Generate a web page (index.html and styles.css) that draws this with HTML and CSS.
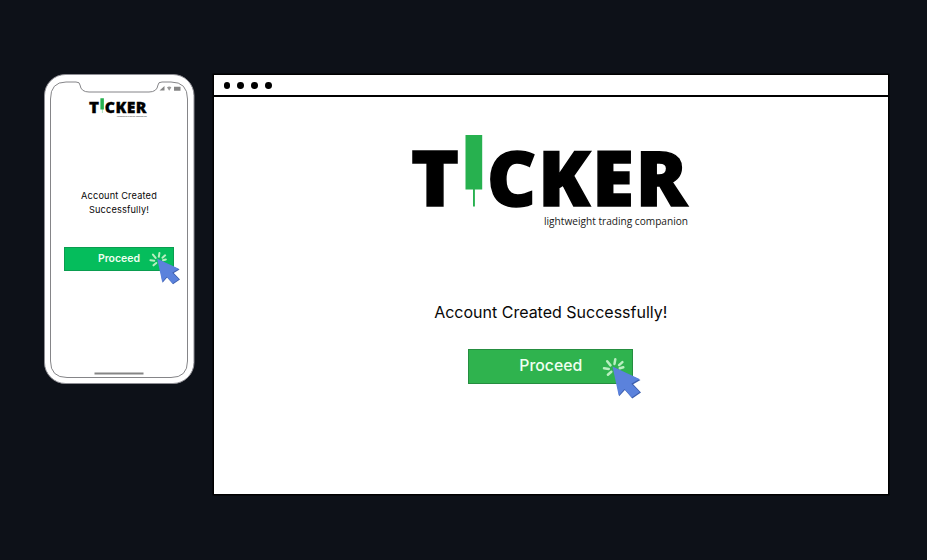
FILE: index.html
```html
<!DOCTYPE html>
<html lang="en">
<head>
<meta charset="utf-8">
<title>Ticker</title>
<link rel="stylesheet" href="styles.css">
</head>
<body>
<svg class="defs" aria-hidden="true">
  <symbol id="logo" viewBox="0 0 278 96" overflow="visible">
    <g class="wordmark">
      <text x="0" y="72" textLength="48" lengthAdjust="spacingAndGlyphs">T</text>
      <text class="spaced" x="76" y="72" textLength="202" lengthAdjust="spacingAndGlyphs">CKER</text>
    </g>
    <path fill="#27b14f" d="M54.500 1h16.700v54.500h-7.300v17h-1.900v-17h-7.500z"/>
    <text class="tagline" x="133" y="91" textLength="144" lengthAdjust="spacingAndGlyphs">lightweight trading companion</text>
  </symbol>
  <symbol id="cursor" viewBox="0 0 40 42">
    <g stroke="#b9efc0" stroke-width="2.500" stroke-linecap="round">
      <path d="M3 11.200l4.800.7M6.200 4.300l3.300 4.100M14.300 2.300l-.8 4.600M21.400 5.200l-3.300 3M18.800 11.300l3.500-1M10.300 14.700l-3.400 3"/>
    </g>
    <path d="M13 10.500l26.500 12.500-7.300 4.200 7.800 8.200-8.700 6-7.400-8.400-5.700 6.300z" fill="#3d5fae"/>
    <path d="M11.500 9.500l27 12.500-8.200 4.800 8.300 8.200-7.900 5.500-7.300-8.600-5.700 6.500z" fill="#5b82dc"/>
  </symbol>
</svg>
<main class="stage">
  <section class="phone">
    <svg class="phone-frame" viewBox="0 0 151 311" fill="none">
      <rect x=".5" y=".5" width="149.500" height="309" rx="21" fill="#fff" stroke="#8e8e94"/>
      <path d="M22 8H32Q36 8 36 11Q37 18 45 18H105Q113 18 114 11Q114 8 118 8H127Q143.500 8 143.500 25V287Q143.500 303.500 127 303.500H23Q6.500 303.500 6.500 287V25Q6.500 8 22 8Z" stroke="#77777b" stroke-width=".9"/>
      <path d="M115.500 16.500h5v-4.500zM130 12.700h6.500v4h-6.500z" fill="#858585"/>
      <path d="M123 13.300q2.200-1.800 4.400 0l-2.200 3.400z" fill="#999"/>
      <path d="M50.500 299.500h49" stroke="#858585" stroke-width="2"/>
    </svg>
    <div class="phone-content">
      <svg class="phone-logo"><use href="#logo"/></svg>
      <p class="phone-message">Account Created<br>Successfully!</p>
      <button class="proceed proceed-small">Proceed<svg class="pointer pointer-small"><use href="#cursor"/></svg></button>
    </div>
  </section>
  <section class="browser">
    <header class="toolbar"><i></i><i></i><i></i><i></i></header>
    <div class="page">
      <svg class="page-logo"><use href="#logo"/></svg>
      <p class="page-message">Account Created Successfully!</p>
      <button class="proceed">Proceed<svg class="pointer"><use href="#cursor"/></svg></button>
    </div>
  </section>
</main>
</body>
</html>
```
FILE: styles.css
```css
* { box-sizing: border-box; }
body {
  margin: 0;
  height: 560px;
  background: #0d1118;
  color: #080808;
  font-family: Inter, "Liberation Sans", sans-serif;
  overflow: hidden;
}
p { margin: 0; }
.defs { position: absolute; width: 0; height: 0; }
.stage { display: flex; align-items: flex-start; gap: 18.500px; padding: 74px 0 0 44px; }

.wordmark { font: 800 76px "Open Sans", sans-serif; fill: #000; stroke: #000; stroke-width: 1.500; }
.spaced { letter-spacing: 2px; }
.tagline { font: 10.500px "Open Sans", sans-serif; fill: #181818; }

.phone { position: relative; width: 151px; height: 311px; }
.phone-frame { position: absolute; inset: 0; width: 151px; height: 311px; }
.phone-content { position: relative; display: flex; flex-direction: column; align-items: center; width: 150px; padding-top: 24px; }
.phone-logo { width: 58px; height: 20px; margin-right: 2px; overflow: visible; }
.phone-message { margin-top: 71px; font-size: 9.200px; line-height: 14px; text-align: center; letter-spacing: .17px; }

.browser { width: 674.500px; height: 419px; margin-top: 1px; background: #fff; box-shadow: 0 0 0 1.500px #000; }
.toolbar { display: flex; align-items: center; gap: 7px; height: 22px; padding: 1px 0 0 10px; border-bottom: 2px solid #000; }
.toolbar i { width: 6.800px; height: 6.800px; border-radius: 50%; background: #000; }
.page { display: flex; flex-direction: column; align-items: center; padding-top: 37px; }
.page-logo { width: 278px; height: 96px; margin-right: 2px; overflow: visible; }
.page-message { margin-top: 70px; font-size: 16px; line-height: 24px; letter-spacing: 0; }

.proceed {
  position: relative;
  width: 165px;
  height: 35px;
  margin-top: 25px;
  padding: 0 0 2px;
  border: 1px solid #258d40;
  background: #2fb34e;
  color: #effff1;
  font: 500 15.800px Inter, sans-serif;
}
.proceed-small {
  width: 110px;
  height: 24px;
  margin-top: 30px;
  padding: 0 0 1px;
  border-color: #0a9d50;
  background: #05bd5c;
  font-size: 10.500px;
  font-weight: 600;
}
.pointer { position: absolute; left: 132px; top: 7px; width: 40px; height: 42px; }
.pointer-small { left: 83px; top: 3px; width: 32px; height: 34px; }
```
